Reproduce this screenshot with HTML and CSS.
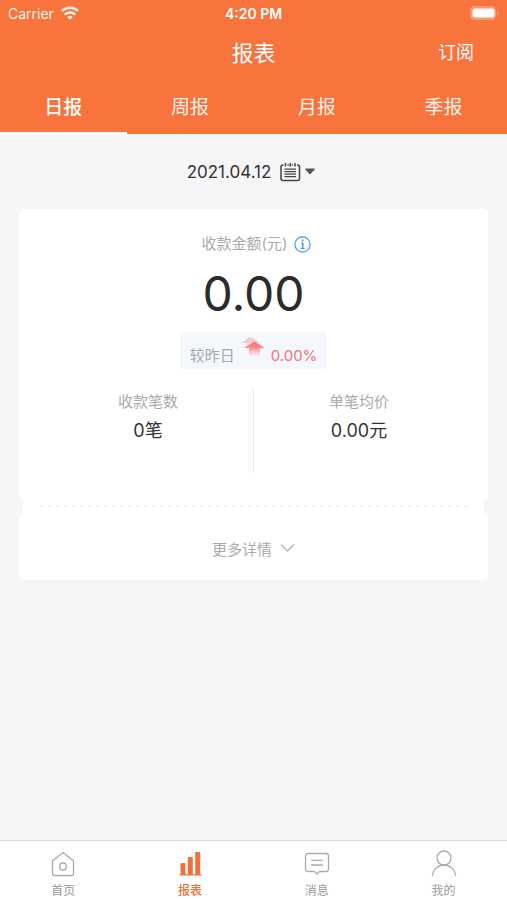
FILE: index.html
```
<!DOCTYPE html>
<html lang="zh-CN">
<head>
    <meta charset="UTF-8">
    <meta name="viewport" content="width=device-width, initial-scale=1.0">
    <title>报表</title>
    <link rel="stylesheet" href="styles.css">
</head>
<body>
    <header class="header">
        <div class="status">
            <div class="carrier">
                <span>Carrier</span>
                <svg width="18" height="14" viewBox="0 0 18 14" fill="none" stroke="#fff" stroke-width="2.6">
                    <path d="M.9 5.1a11.6 11.6 0 0 1 16.2 0"/>
                    <path d="M3.700 8.700a7.500 7.500 0 0 1 10.600 0"/>
                    <path d="M9 13.800 6.200 11a4 4 0 0 1 5.600 0z" fill="#fff" stroke="none"/>
                </svg>
            </div>
            <span class="time">4:20 PM</span>
            <svg class="battery" width="29" height="14" viewBox="0 0 29 14">
                <rect x=".5" y=".5" width="25" height="13" rx="4" fill="#fff" fill-opacity=".25" stroke="#fff" stroke-opacity=".2"/>
                <rect x="2.500" y="2.500" width="22" height="9" rx="2.5" fill="#fff"/>
                <path d="M27 5v4q1.6-.6 1.6-2T27 5z" fill="#fff" fill-opacity=".35"/>
            </svg>
        </div>
        <div class="title-bar">
            <h1>报表</h1>
            <button class="subscribe" type="button">订阅</button>
        </div>
        <nav class="tabs">
            <a class="active" href="#day">日报</a>
            <a href="#week">周报</a>
            <a href="#month">月报</a>
            <a href="#season">季报</a>
        </nav>
    </header>
    <main class="main">
        <button class="date" type="button">
            <span>2021.04.12</span>
            <svg width="36" height="20" viewBox="0 0 36 20" fill="none" stroke="#444" stroke-width="1.5">
                <path d="M3.500 3H3a2 2 0 0 0-2 2v11.500a2 2 0 0 0 2 2h14.500a2 2 0 0 0 2-2V5a2 2 0 0 0-2-2H17M7.500 3h1.200M11.700 3H13"/>
                <path d="M5.500 1v3.500M10.200 1v3.500M15 1v3.500"/>
                <path d="M4.500 7.200h11.500M4.500 9.700h11.500M4.500 12.200h11.500M4.500 14.700h11.500" stroke-width="1.3"/>
                <path d="M25.500 7h9L30 12z" fill="#555" stroke="#555" stroke-width="1" stroke-linejoin="round"/>
            </svg>
        </button>
        <section class="card">
            <div class="summary">
                <div class="label">
                    <span>收款金额(元)</span>
                    <svg width="17" height="17" viewBox="0 0 17 17" fill="none" stroke="#4a97f5" stroke-width="1.2">
                        <circle cx="8.500" cy="8.500" r="7.600"/>
                        <path d="M7.200 7.200h1.600v5.300M6.800 12.500h3.700" stroke-width="1.400"/>
                        <circle cx="8.600" cy="4.600" r="1" fill="#4a97f5" stroke="none"/>
                    </svg>
                </div>
                <strong class="amount">0.00</strong>
                <div class="compare">
                    <span>较昨日</span>
                    <svg width="26" height="22" viewBox="0 0 26 22">
                        <defs>
                            <linearGradient id="up" x1="0" y1="0" x2="0" y2="1">
                                <stop offset="0" stop-color="#f56a72"/>
                                <stop offset=".4" stop-color="#f9898f"/>
                                <stop offset="1" stop-color="#fbb4b8" stop-opacity="0"/>
                            </linearGradient>
                        </defs>
                        <path d="M1 7 10 1l11 6h-4v6H6V7z" fill="url(#up)" opacity=".4"/>
                        <path d="M4 12 14.500 5.500 25 12h-5v9H9v-9z" fill="url(#up)"/>
                    </svg>
                    <span class="rate">0.00%</span>
                </div>
                <dl class="stats">
                    <div>
                        <dt>收款笔数</dt>
                        <dd>0笔</dd>
                    </div>
                    <div>
                        <dt>单笔均价</dt>
                        <dd>0.00元</dd>
                    </div>
                </dl>
            </div>
            <div class="split"></div>
            <button class="more" type="button">
                <span>更多详情</span>
                <svg width="15" height="10" viewBox="0 0 15 10" fill="none" stroke="#b5b5b5" stroke-width="1.3">
                    <path d="m1 1.500 6.500 6.500L14 1.500"/>
                </svg>
            </button>
        </section>
    </main>
    <nav class="footer">
        <a href="#home">
            <svg width="28" height="28" viewBox="0 0 28 28" fill="none" stroke="#aaa" stroke-width="1.3" stroke-linejoin="round">
                <path d="M14 2.500 24.500 11v12.500a2 2 0 0 1-2 2h-17a2 2 0 0 1-2-2V11z"/>
                <rect x="10.700" y="13" width="6.600" height="7" rx="3"/>
            </svg>
            <span>首页</span>
        </a>
        <a class="active" href="#report">
            <svg width="28" height="28" viewBox="0 0 28 28" fill="#f4703a">
                <rect x="4.500" y="13" width="5" height="12" rx="1"/>
                <rect x="11.800" y="7" width="5" height="18" rx="1"/>
                <rect x="19.200" y="2" width="5" height="23" rx="1"/>
                <rect x="3.500" y="24.200" width="22" height="1.300"/>
            </svg>
            <span>报表</span>
        </a>
        <a href="#message">
            <svg width="28" height="28" viewBox="0 0 28 28" fill="none" stroke="#aaa" stroke-width="1.3" stroke-linejoin="round">
                <path d="M5 3.500h18a2.500 2.500 0 0 1 2.500 2.500v13a2.500 2.500 0 0 1-2.500 2.500h-6.500L14 24l-2.500-2.500H5A2.500 2.500 0 0 1 2.500 19V6A2.500 2.500 0 0 1 5 3.500z"/>
                <path d="M8 10.300h12M8 15h12"/>
            </svg>
            <span>消息</span>
        </a>
        <a href="#mine">
            <svg width="28" height="28" viewBox="0 0 28 28" fill="none" stroke="#aaa" stroke-width="1.3">
                <circle cx="14" cy="8" r="7"/>
                <path d="M2.500 26C3 19 8 15 14 15s11 4 11.500 11"/>
            </svg>
            <span>我的</span>
        </a>
    </nav>
</body>
</html>
```
FILE: styles.css
```
* {
    box-sizing: border-box;
}
body {
    margin: 0;
    min-height: 100vh;
    display: flex;
    flex-direction: column;
    background: #f6f6f9;
    color: #333;
    font-family: Inter, "Noto Sans CJK SC", sans-serif;
}
a {
    color: inherit;
    text-decoration: none;
}
button {
    padding: 0;
    border: 0;
    background: none;
    color: inherit;
    font: inherit;
    cursor: pointer;
}
svg {
    display: block;
    flex: none;
}
.header {
    background: #f9733c;
    color: #fff;
}
.status {
    display: grid;
    grid-template-columns: 1fr auto 1fr;
    align-items: center;
    height: 26px;
    padding: 0 8px;
    font-size: 14px;
}
.carrier {
    display: flex;
    align-items: center;
    gap: 7px;
    opacity: .9;
}
.time {
    font-weight: 600;
}
.battery {
    justify-self: end;
}
.title-bar {
    display: grid;
    grid-template-columns: 1fr auto 1fr;
    align-items: center;
    height: 50px;
    padding: 0 33px;
}
.title-bar h1 {
    grid-column: 2;
    margin: 0;
    font-size: 22px;
    font-weight: 400;
}
.subscribe {
    justify-self: end;
    font-size: 18px;
}
.tabs {
    display: flex;
    height: 59px;
    border-bottom: 1px solid #fff;
}
.tabs a {
    flex: 1;
    padding-top: 9px;
    font-size: 19px;
    line-height: 46px;
    text-align: center;
    opacity: .9;
}
.tabs .active {
    border-bottom: 2px solid #fff;
    font-weight: 500;
    opacity: 1;
}
.main {
    flex: 1;
    display: flex;
    flex-direction: column;
    padding: 20px 19px;
}
.date {
    align-self: center;
    display: flex;
    align-items: center;
    gap: 9px;
    height: 34px;
    padding-right: 4px;
    font-size: 17px;
}
.card {
    margin-top: 20px;
}
.summary {
    display: flex;
    flex-direction: column;
    align-items: center;
    padding: 25px 0 27px;
    background: #fff;
    border-radius: 5px;
}
.label {
    display: flex;
    align-items: center;
    gap: 7px;
    padding-left: 6px;
    color: #aaa;
    font-size: 15px;
    line-height: 20px;
}
.amount {
    margin-top: 10px;
    color: #2b2b2b;
    font-size: 48px;
    font-weight: 400;
    line-height: 60px;
}
.compare {
    display: flex;
    gap: 5px;
    height: 37px;
    margin-top: 8px;
    padding: 4px 10px 0;
    background: #f4f8fd;
    border-radius: 4px;
    color: #a5a9ae;
    font-size: 15px;
    line-height: 40px;
}
.compare .rate {
    color: #f0727a;
}
.stats {
    display: flex;
    align-self: stretch;
    margin: 19px 0 0;
    padding: 0 24px;
    text-align: center;
}
.stats div {
    flex: 1;
    height: 85px;
    padding-top: 4px;
}
.stats div + div {
    border-left: 1px solid #ebebeb;
}
.stats dt {
    color: #aaa;
    font-size: 15px;
    line-height: 20px;
}
.stats dd {
    margin: 4px 0 0;
    font-size: 18px;
    line-height: 30px;
}
.split {
    height: 14px;
    margin: 0 4px;
    padding: 6px 17px 0;
    background: #fff;
}
.split::before {
    content: "";
    display: block;
    height: 1px;
    background: repeating-linear-gradient(90deg, #e6e6e6 0 4px, transparent 4px 8px);
}
.more {
    display: flex;
    align-items: center;
    justify-content: center;
    gap: 8px;
    width: 100%;
    height: 66px;
    padding-top: 2px;
    background: #fff;
    border-radius: 5px;
    color: #aaa;
    font-size: 15px;
}
.footer {
    display: flex;
    height: 60px;
    background: #fff;
    border-top: 1px solid #d9d9dc;
}
.footer a {
    flex: 1;
    display: flex;
    flex-direction: column;
    align-items: center;
    gap: 4px;
    padding-top: 9px;
    color: #999;
    font-size: 12px;
    line-height: 18px;
}
.footer .active {
    color: #f4703a;
    font-weight: 500;
}
```
